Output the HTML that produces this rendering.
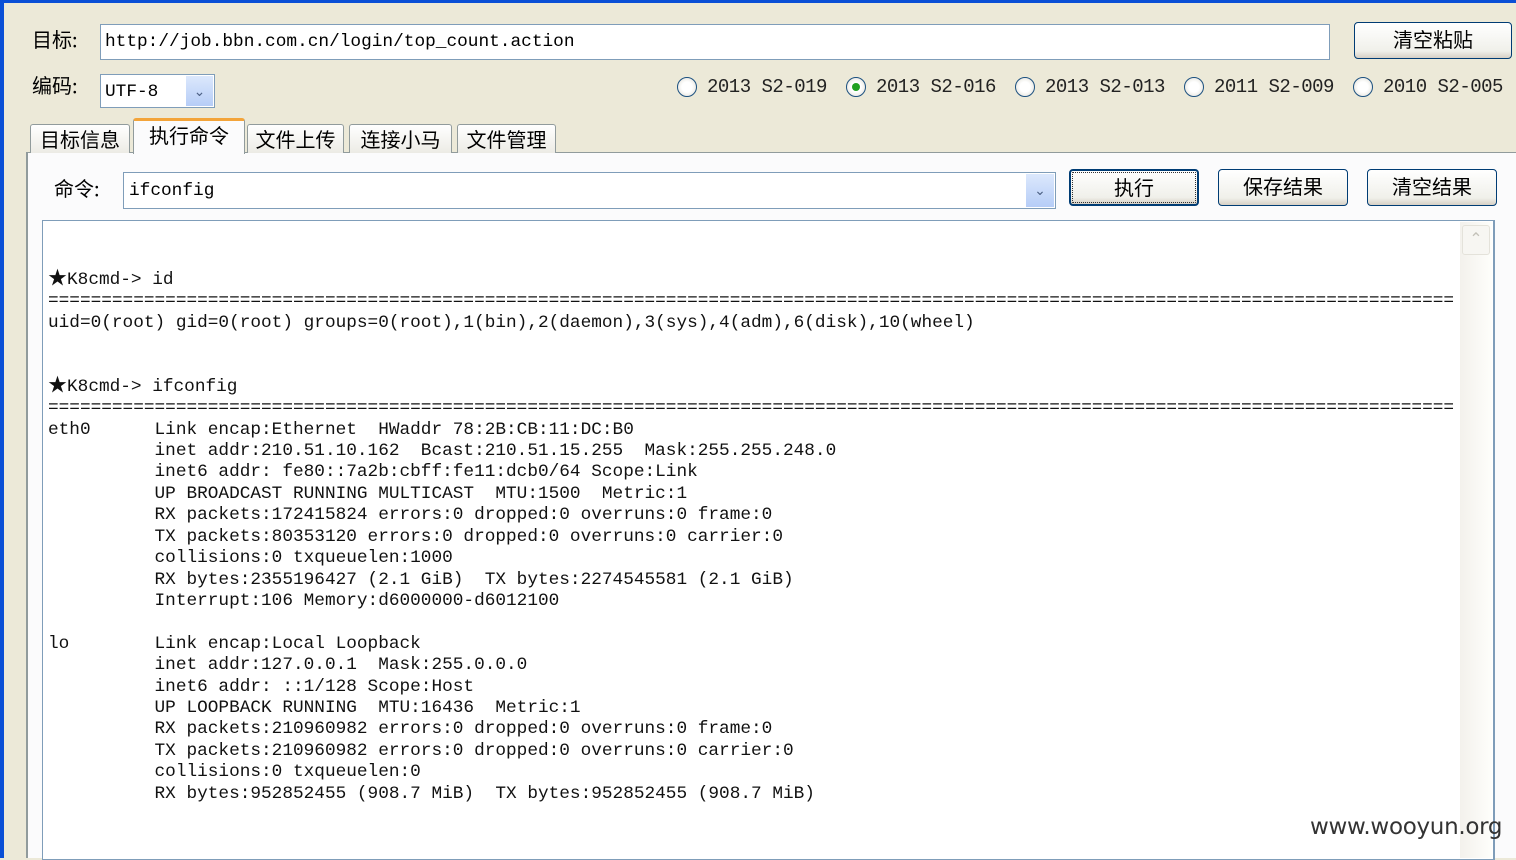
<!DOCTYPE html>
<html><head><meta charset="utf-8"><style>
*{margin:0;padding:0;box-sizing:border-box}
body{width:1516px;height:858px;overflow:hidden;background:#ece9d8;position:relative;font-family:"Liberation Sans","Noto Sans CJK SC",sans-serif;color:#000}
.a{position:absolute}
.lbl{font-size:20px;font-family:"Noto Sans CJK SC","WenQuanYi Zen Hei",sans-serif}
.inp{background:#fff;border:1px solid #7f9db9}
.mono{font-family:"Liberation Mono","Noto Sans CJK SC",monospace;font-size:17.8px}
.btn{border:1px solid #003c74;border-radius:4px;background:linear-gradient(#fff,#f0f0ea 80%,#d6d0c5);font-size:20px;text-align:center;font-family:"Noto Sans CJK SC",sans-serif;line-height:32px}
.dd{background:linear-gradient(#dce8fc,#b6cdf7);border-left:1px solid #fff;color:#4d6185;font-size:14px;text-align:center}
.rad{width:20px;height:20px;border-radius:50%;border:1px solid #1c5180;background:radial-gradient(#fff 40%,#dcd9cf)}
.rt{font-size:19px;color:#222;font-family:"Liberation Mono",monospace;letter-spacing:-0.5px}
.tab{border:1px solid #919b9c;border-bottom:none;border-radius:3px 3px 0 0;background:linear-gradient(#fff,#ecebe5);font-size:20px;text-align:center;font-family:"Noto Sans CJK SC",sans-serif;line-height:28px}
pre{font-family:"Liberation Mono","DejaVu Sans Mono",monospace;font-size:17.75px;line-height:21.4px;color:#111}
.st{font-family:"Noto Sans CJK SC",sans-serif;font-size:19px;line-height:10px}
</style></head><body>
<div class="a" style="left:0;top:0;width:1516px;height:3px;background:#0a4fd6"></div>
<div class="a" style="left:0;top:0;width:4px;height:858px;background:#0a4fd6"></div>

<div class="a lbl" style="left:32px;top:24px">目标:</div>
<div class="a inp mono" style="left:100px;top:24px;width:1230px;height:36px;padding:4px 4px;line-height:26px">http://job.bbn.com.cn/login/top_count.action</div>
<div class="a btn" style="left:1354px;top:22px;width:158px;height:37px">清空粘贴</div>

<div class="a lbl" style="left:32px;top:70px">编码:</div>
<div class="a inp mono" style="left:100px;top:74px;width:115px;height:34px;padding:4px 4px;line-height:26px">UTF-8</div>
<div class="a dd" style="left:185px;top:76px;width:28px;height:30px;line-height:30px">&#8964;</div>

<div class="a rad" style="left:677px;top:77px"></div><div class="a rt" style="left:707px;top:76px">2013 S2-019</div>
<div class="a rad" style="left:846px;top:77px"></div><div class="a" style="left:852px;top:83px;width:8px;height:8px;border-radius:50%;background:#21a121"></div><div class="a rt" style="left:876px;top:76px">2013 S2-016</div>
<div class="a rad" style="left:1015px;top:77px"></div><div class="a rt" style="left:1045px;top:76px">2013 S2-013</div>
<div class="a rad" style="left:1184px;top:77px"></div><div class="a rt" style="left:1214px;top:76px">2011 S2-009</div>
<div class="a rad" style="left:1353px;top:77px"></div><div class="a rt" style="left:1383px;top:76px">2010 S2-005</div>

<div class="a" style="left:26px;top:152px;width:1490px;height:706px;background:#fbfbfc;border-top:1px solid #919b9c;border-left:2px solid #919b9c"></div>
<div class="a tab" style="left:30px;top:124px;width:100px;height:29px">目标信息</div>
<div class="a tab" style="left:133px;top:118px;width:112px;height:36px;background:#fbfbfc;border-top:3px solid #f3a43a;line-height:28px">执行命令</div>
<div class="a tab" style="left:247px;top:124px;width:97px;height:29px">文件上传</div>
<div class="a tab" style="left:349px;top:124px;width:103px;height:29px">连接小马</div>
<div class="a tab" style="left:457px;top:124px;width:99px;height:29px">文件管理</div>

<div class="a lbl" style="left:54px;top:173px">命令:</div>
<div class="a inp mono" style="left:123px;top:172px;width:933px;height:37px;padding:4px 5px;line-height:28px">ifconfig</div>
<div class="a dd" style="left:1025px;top:174px;width:29px;height:33px;line-height:33px">&#8964;</div>
<div class="a btn" style="left:1069px;top:169px;width:130px;height:37px;outline:1px dotted #333;outline-offset:-4px;border-width:2px">执行</div>
<div class="a btn" style="left:1218px;top:169px;width:130px;height:37px">保存结果</div>
<div class="a btn" style="left:1367px;top:169px;width:130px;height:37px">清空结果</div>

<div class="a" style="left:42px;top:220px;width:1453px;height:640px;background:#fff;border:1px solid #7f9db9;border-right:2px solid #7f9db9"></div>
<div class="a" style="left:1460px;top:222px;width:32px;height:636px;background:linear-gradient(90deg,#f3f1ec,#fefefb)"></div>
<div class="a" style="left:1462px;top:225px;width:28px;height:30px;border:1px solid #e4e2da;border-radius:3px;background:#f7f6f2;color:#c3c1b8;text-align:center;font-size:16px;line-height:28px">&#8963;</div>

<pre class="a" style="left:48px;top:227px">


<span class="st">★</span>K8cmd-&gt; id
====================================================================================================================================
uid=0(root) gid=0(root) groups=0(root),1(bin),2(daemon),3(sys),4(adm),6(disk),10(wheel)


<span class="st">★</span>K8cmd-&gt; ifconfig
====================================================================================================================================
eth0      Link encap:Ethernet  HWaddr 78:2B:CB:11:DC:B0
          inet addr:210.51.10.162  Bcast:210.51.15.255  Mask:255.255.248.0
          inet6 addr: fe80::7a2b:cbff:fe11:dcb0/64 Scope:Link
          UP BROADCAST RUNNING MULTICAST  MTU:1500  Metric:1
          RX packets:172415824 errors:0 dropped:0 overruns:0 frame:0
          TX packets:80353120 errors:0 dropped:0 overruns:0 carrier:0
          collisions:0 txqueuelen:1000
          RX bytes:2355196427 (2.1 GiB)  TX bytes:2274545581 (2.1 GiB)
          Interrupt:106 Memory:d6000000-d6012100

lo        Link encap:Local Loopback
          inet addr:127.0.0.1  Mask:255.0.0.0
          inet6 addr: ::1/128 Scope:Host
          UP LOOPBACK RUNNING  MTU:16436  Metric:1
          RX packets:210960982 errors:0 dropped:0 overruns:0 frame:0
          TX packets:210960982 errors:0 dropped:0 overruns:0 carrier:0
          collisions:0 txqueuelen:0
          RX bytes:952852455 (908.7 MiB)  TX bytes:952852455 (908.7 MiB)
</pre>
<div class="a" style="left:1310px;top:814px;font-size:23px;color:#333;font-family:'DejaVu Sans',sans-serif;letter-spacing:-0.3px">www.wooyun.org</div>
</body></html>
